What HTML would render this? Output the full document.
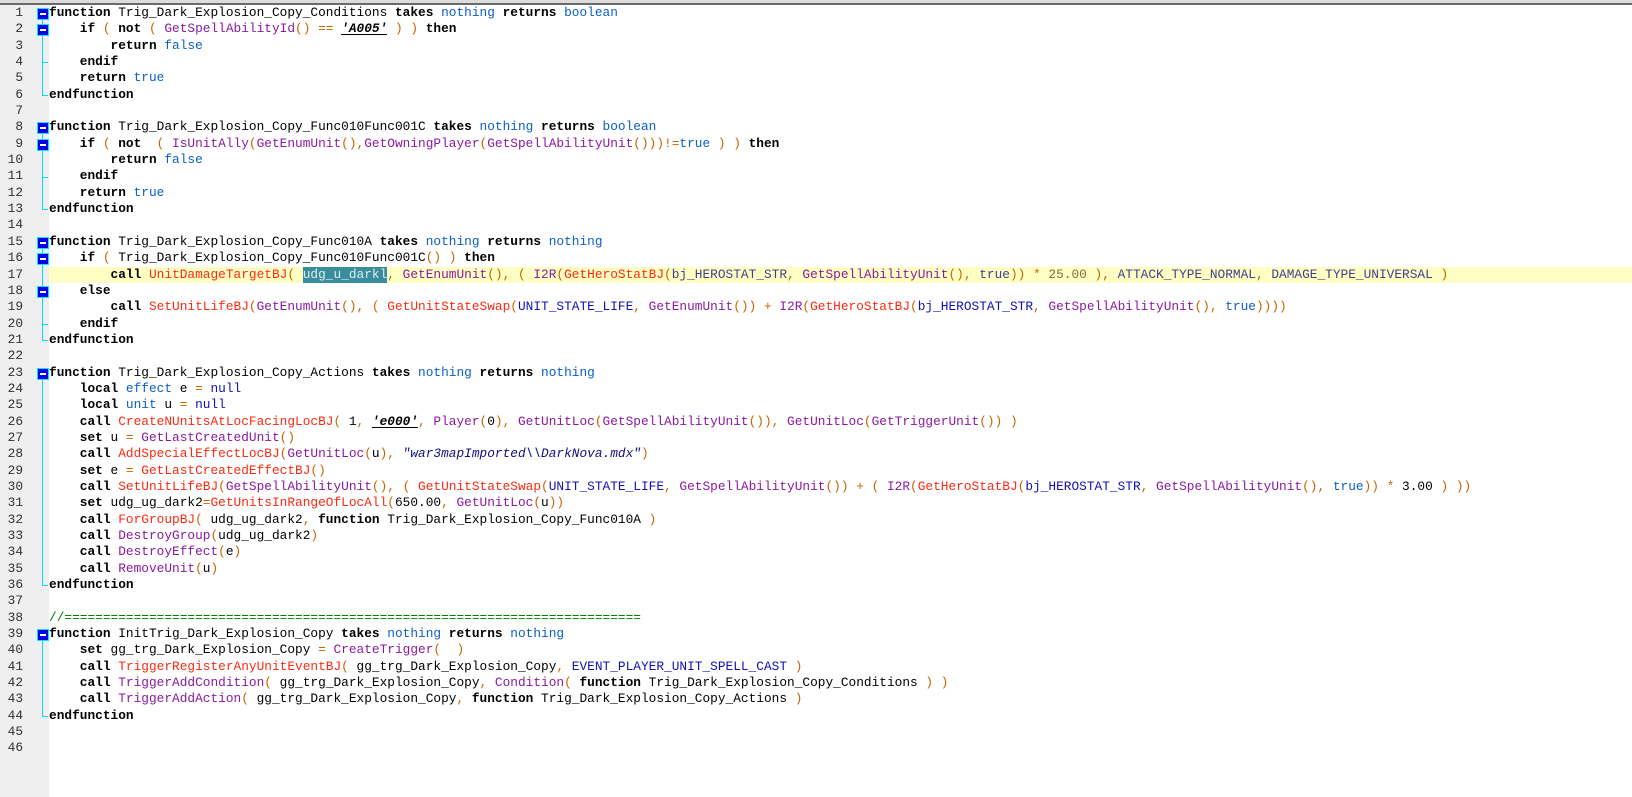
<!DOCTYPE html>
<html><head><meta charset="utf-8"><style>
html,body{margin:0;padding:0;width:1632px;height:797px;overflow:hidden;background:#fff}
#top{position:absolute;left:0;top:0;width:1632px;height:3px;background:#dcdcdc}
#top2{position:absolute;left:0;top:3px;width:1632px;height:2px;background:#6a6a6a}
#gut{position:absolute;left:0;top:5px;width:49px;height:792px;background:#efefef}
#nums,#code{font-family:"Liberation Mono","DejaVu Sans Mono","Courier New",monospace;font-size:12.8px;line-height:16.35px;white-space:pre;font-variant-ligatures:none;letter-spacing:0}
#nums{position:absolute;left:0;top:5px;width:23px;text-align:right;color:#303030}
#hl{position:absolute;left:49px;top:266.6px;width:1583px;height:16.35px;background:#ffffc4}
#code{position:absolute;left:49px;top:5px;margin:0;color:#000}
.ch{display:inline-block;width:7.69px;text-align:center;overflow:visible}
.k{font-weight:bold}
.t{color:#0a5fc8}
.n{color:#8a1aa0}
.b{color:#ff2a10}
.o{color:#c86400}
.c{color:#1010b8}
.s{font-weight:bold;font-style:italic;text-decoration:underline}
.s .ch{border-bottom:1px solid #000;height:13px;vertical-align:top}
.q{color:#101080;font-style:italic}
.g{color:#008000}
.sel,.sel .ch{background:#3a8d9d;color:#dcedf0}
.mu{color:#8a6a3a}
.mb{color:#404090}
.box{position:absolute;left:37px;width:10px;height:10px;background:#0000e8;border:1px solid #00e8ff}
.box:after{content:"";position:absolute;left:2px;top:4px;width:6px;height:2px;background:#fff}
.vl{position:absolute;left:42px;width:1px;background:#00e0f0}
.tk{position:absolute;left:42px;width:6px;height:1px;background:#00e0f0}
</style></head><body>
<div id="top"></div><div id="top2"></div>
<div id="gut"></div>
<div id="hl"></div>
<div id="nums">1
2
3
4
5
6
7
8
9
10
11
12
13
14
15
16
17
18
19
20
21
22
23
24
25
26
27
28
29
30
31
32
33
34
35
36
37
38
39
40
41
42
43
44
45
46</div>
<div id="folds"></div>
<pre id="code"><span class="k">function</span> Trig_Dark_Explosion_Copy_Conditions <span class="k">takes</span> <span class="t">nothing</span> <span class="k">returns</span> <span class="t">boolean</span>
    <span class="k">if</span> <span class="o">(</span> <span class="k">not</span> <span class="o">(</span> <span class="n">GetSpellAbilityId</span><span class="o">()</span> <span class="o">==</span> <span class="s">'A005'</span> <span class="o">)</span> <span class="o">)</span> <span class="k">then</span>
        <span class="k">return</span> <span class="t">false</span>
    <span class="k">endif</span>
    <span class="k">return</span> <span class="t">true</span>
<span class="k">endfunction</span>

<span class="k">function</span> Trig_Dark_Explosion_Copy_Func010Func001C <span class="k">takes</span> <span class="t">nothing</span> <span class="k">returns</span> <span class="t">boolean</span>
    <span class="k">if</span> <span class="o">(</span> <span class="k">not</span>  <span class="o">(</span> <span class="n">IsUnitAlly</span><span class="o">(</span><span class="n">GetEnumUnit</span><span class="o">(),</span><span class="n">GetOwningPlayer</span><span class="o">(</span><span class="n">GetSpellAbilityUnit</span><span class="o">()))!=</span><span class="t">true</span> <span class="o">)</span> <span class="o">)</span> <span class="k">then</span>
        <span class="k">return</span> <span class="t">false</span>
    <span class="k">endif</span>
    <span class="k">return</span> <span class="t">true</span>
<span class="k">endfunction</span>

<span class="k">function</span> Trig_Dark_Explosion_Copy_Func010A <span class="k">takes</span> <span class="t">nothing</span> <span class="k">returns</span> <span class="t">nothing</span>
    <span class="k">if</span> <span class="o">(</span> Trig_Dark_Explosion_Copy_Func010Func001C<span class="o">()</span> <span class="o">)</span> <span class="k">then</span>
        <span class="k">call</span> <span class="b">UnitDamageTargetBJ</span><span class="o">(</span> <span class="sel">udg_u_darkl</span><span class="mu">,</span> <span class="n">GetEnumUnit</span><span class="o">(),</span> <span class="o">(</span> <span class="n">I2R</span><span class="o">(</span><span class="b">GetHeroStatBJ</span><span class="o">(</span><span class="mb">bj_HEROSTAT_STR</span><span class="mu">,</span> <span class="n">GetSpellAbilityUnit</span><span class="o">(),</span> <span class="mb">true</span><span class="o">))</span> <span class="o">*</span> <span class="mu">25.00</span> <span class="o">),</span> <span class="mb">ATTACK_TYPE_NORMAL</span><span class="mu">,</span> <span class="mb">DAMAGE_TYPE_UNIVERSAL</span> <span class="o">)</span>
    <span class="k">else</span>
        <span class="k">call</span> <span class="b">SetUnitLifeBJ</span><span class="o">(</span><span class="n">GetEnumUnit</span><span class="o">(),</span> <span class="o">(</span> <span class="b">GetUnitStateSwap</span><span class="o">(</span><span class="c">UNIT_STATE_LIFE</span><span class="o">,</span> <span class="n">GetEnumUnit</span><span class="o">())</span> <span class="o">+</span> <span class="n">I2R</span><span class="o">(</span><span class="b">GetHeroStatBJ</span><span class="o">(</span><span class="c">bj_HEROSTAT_STR</span><span class="o">,</span> <span class="n">GetSpellAbilityUnit</span><span class="o">(),</span> <span class="t">true</span><span class="o">))))</span>
    <span class="k">endif</span>
<span class="k">endfunction</span>

<span class="k">function</span> Trig_Dark_Explosion_Copy_Actions <span class="k">takes</span> <span class="t">nothing</span> <span class="k">returns</span> <span class="t">nothing</span>
    <span class="k">local</span> <span class="t">effect</span> e <span class="o">=</span> <span class="c">null</span>
    <span class="k">local</span> <span class="t">unit</span> u <span class="o">=</span> <span class="c">null</span>
    <span class="k">call</span> <span class="b">CreateNUnitsAtLocFacingLocBJ</span><span class="o">(</span> 1<span class="o">,</span> <span class="s">'e000'</span><span class="o">,</span> <span class="n">Player</span><span class="o">(</span>0<span class="o">),</span> <span class="n">GetUnitLoc</span><span class="o">(</span><span class="n">GetSpellAbilityUnit</span><span class="o">()),</span> <span class="n">GetUnitLoc</span><span class="o">(</span><span class="n">GetTriggerUnit</span><span class="o">())</span> <span class="o">)</span>
    <span class="k">set</span> u <span class="o">=</span> <span class="n">GetLastCreatedUnit</span><span class="o">()</span>
    <span class="k">call</span> <span class="b">AddSpecialEffectLocBJ</span><span class="o">(</span><span class="n">GetUnitLoc</span><span class="o">(</span>u<span class="o">),</span> <span class="q">"war3mapImported\\DarkNova.mdx"</span><span class="o">)</span>
    <span class="k">set</span> e <span class="o">=</span> <span class="b">GetLastCreatedEffectBJ</span><span class="o">()</span>
    <span class="k">call</span> <span class="b">SetUnitLifeBJ</span><span class="o">(</span><span class="n">GetSpellAbilityUnit</span><span class="o">(),</span> <span class="o">(</span> <span class="b">GetUnitStateSwap</span><span class="o">(</span><span class="c">UNIT_STATE_LIFE</span><span class="o">,</span> <span class="n">GetSpellAbilityUnit</span><span class="o">())</span> <span class="o">+</span> <span class="o">(</span> <span class="n">I2R</span><span class="o">(</span><span class="b">GetHeroStatBJ</span><span class="o">(</span><span class="c">bj_HEROSTAT_STR</span><span class="o">,</span> <span class="n">GetSpellAbilityUnit</span><span class="o">(),</span> <span class="t">true</span><span class="o">))</span> <span class="o">*</span> 3.00 <span class="o">)</span> <span class="o">))</span>
    <span class="k">set</span> udg_ug_dark2<span class="o">=</span><span class="b">GetUnitsInRangeOfLocAll</span><span class="o">(</span>650.00<span class="o">,</span> <span class="n">GetUnitLoc</span><span class="o">(</span>u<span class="o">))</span>
    <span class="k">call</span> <span class="b">ForGroupBJ</span><span class="o">(</span> udg_ug_dark2<span class="o">,</span> <span class="k">function</span> Trig_Dark_Explosion_Copy_Func010A <span class="o">)</span>
    <span class="k">call</span> <span class="n">DestroyGroup</span><span class="o">(</span>udg_ug_dark2<span class="o">)</span>
    <span class="k">call</span> <span class="n">DestroyEffect</span><span class="o">(</span>e<span class="o">)</span>
    <span class="k">call</span> <span class="n">RemoveUnit</span><span class="o">(</span>u<span class="o">)</span>
<span class="k">endfunction</span>

<span class="g">//===========================================================================</span>
<span class="k">function</span> InitTrig_Dark_Explosion_Copy <span class="k">takes</span> <span class="t">nothing</span> <span class="k">returns</span> <span class="t">nothing</span>
    <span class="k">set</span> gg_trg_Dark_Explosion_Copy <span class="o">=</span> <span class="n">CreateTrigger</span><span class="o">(</span>  <span class="o">)</span>
    <span class="k">call</span> <span class="b">TriggerRegisterAnyUnitEventBJ</span><span class="o">(</span> gg_trg_Dark_Explosion_Copy<span class="o">,</span> <span class="c">EVENT_PLAYER_UNIT_SPELL_CAST</span> <span class="o">)</span>
    <span class="k">call</span> <span class="n">TriggerAddCondition</span><span class="o">(</span> gg_trg_Dark_Explosion_Copy<span class="o">,</span> <span class="n">Condition</span><span class="o">(</span> <span class="k">function</span> Trig_Dark_Explosion_Copy_Conditions <span class="o">)</span> <span class="o">)</span>
    <span class="k">call</span> <span class="n">TriggerAddAction</span><span class="o">(</span> gg_trg_Dark_Explosion_Copy<span class="o">,</span> <span class="k">function</span> Trig_Dark_Explosion_Copy_Actions <span class="o">)</span>
<span class="k">endfunction</span>
</pre>
<script>
(function(){
var L=16.35,T=function(n){return 5+(n-1)*L;};
var f=document.getElementById('folds'),h='';
[[1,6],[8,13],[15,21],[23,36],[39,44]].forEach(function(r){
  var y0=T(r[0])+13,y1=T(r[1])+8;
  h+='<div class="vl" style="top:'+y0+'px;height:'+(y1-y0+1)+'px"></div>';
  h+='<div class="tk" style="top:'+y1+'px"></div>';
});
[4,11,20].forEach(function(n){h+='<div class="tk" style="top:'+(T(n)+8)+'px"></div>';});
[1,2,8,9,15,16,18,23,39].forEach(function(n){h+='<div class="box" style="top:'+(T(n)+3)+'px"></div>';});
f.innerHTML=h;
/* force fixed-width character cells */
var code=document.getElementById('code');
var walker=document.createTreeWalker(code,NodeFilter.SHOW_TEXT,null,false);
var nodes=[],nd;while(nd=walker.nextNode())nodes.push(nd);
nodes.forEach(function(t){
  var s=t.nodeValue,frag=document.createDocumentFragment();
  for(var i=0;i<s.length;i++){
    var c=s[i];
    if(c==='\n'){frag.appendChild(document.createTextNode('\n'));}
    else{var sp=document.createElement('span');sp.className='ch';sp.textContent=(c===' ')?'\u00a0':c;frag.appendChild(sp);}
  }
  t.parentNode.replaceChild(frag,t);
});
})();
</script>
</body></html>
